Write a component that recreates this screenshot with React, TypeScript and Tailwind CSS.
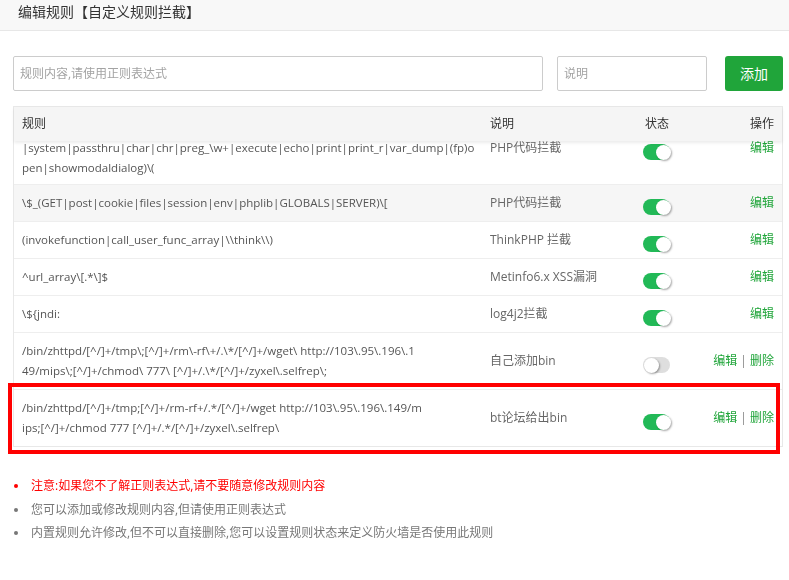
import React, { useLayoutEffect, useRef } from 'react';

type Rule = {
    lines: string[];
    desc: string;
    on: boolean;
    canDelete: boolean;
};

const rules: Rule[] = [
    {
        lines: [
            "(\\<\\?php|eval|assert|include|require|fopen|file_get_contents|file_put_contents|exec",
            "|system|passthru|char|chr|preg_\\w+|execute|echo|print|print_r|var_dump|(fp)o",
            "pen|showmodaldialog)\\(",
        ],
        desc: 'PHP代码拦截',
        on: true,
        canDelete: false,
    },
    {
        lines: ["\\$_(GET|post|cookie|files|session|env|phplib|GLOBALS|SERVER)\\["],
        desc: 'PHP代码拦截',
        on: true,
        canDelete: false,
    },
    {
        lines: ["(invokefunction|call_user_func_array|\\\\think\\\\)"],
        desc: 'ThinkPHP 拦截',
        on: true,
        canDelete: false,
    },
    {
        lines: ["^url_array\\[.*\\]$"],
        desc: 'Metinfo6.x XSS漏洞',
        on: true,
        canDelete: false,
    },
    {
        lines: ["\\${jndi:"],
        desc: 'log4j2拦截',
        on: true,
        canDelete: false,
    },
    {
        lines: [
            "/bin/zhttpd/[^/]+/tmp\\;[^/]+/rm\\-rf\\+/.\\*/[^/]+/wget\\ http://103\\.95\\.196\\.1",
            "49/mips\\;[^/]+/chmod\\ 777\\ [^/]+/.\\*/[^/]+/zyxel\\.selfrep\\;",
        ],
        desc: '自己添加bin',
        on: false,
        canDelete: true,
    },
    {
        lines: [
            "/bin/zhttpd/[^/]+/tmp;[^/]+/rm-rf+/.*/[^/]+/wget http://103\\.95\\.196\\.149/m",
            "ips;[^/]+/chmod 777 [^/]+/.*/[^/]+/zyxel\\.selfrep\\",
        ],
        desc: 'bt论坛给出bin',
        on: true,
        canDelete: true,
    },
];

const notes = [
    { text: '注意:如果您不了解正则表达式,请不要随意修改规则内容', warn: true },
    { text: '您可以添加或修改规则内容,但请使用正则表达式', warn: false },
    { text: '内置规则允许修改,但不可以直接删除,您可以设置规则状态来定义防火墙是否使用此规则', warn: false },
];

const Toggle = ({ on }: { on: boolean }) => (
    <span
        className={`relative top-[4px] inline-block h-[16px] w-[27px] rounded-full ${on ? 'bg-[#22b957]' : 'bg-[#dedede]'}`}
    >
        <span
            className={`absolute top-[1px] h-[15px] w-[15px] rounded-full bg-white shadow-[1px_1px_2px_rgba(0,0,0,0.35)] ${on ? 'right-[-1px]' : 'left-[1px]'}`}
        />
    </span>
);

export default function App() {
    const bodyRef = useRef<HTMLDivElement>(null);

    // body of the table is scrolled a little, first row sits under the header
    useLayoutEffect(() => {
        if (bodyRef.current) bodyRef.current.scrollTop = 36;
    }, []);

    return (
        <div className="relative h-[580px] w-[789px] overflow-hidden bg-white font-['Open_Sans','Noto_Sans_CJK_SC',sans-serif] text-[12px] text-[#555]">
            {/* Title bar */}
            <div className="h-[31px] border-b border-[#e7e7e7] bg-[#f8f8f8] pl-[18px] pt-[2px] text-[14px] leading-[20px] text-[#333]">
                编辑规则【自定义规则拦截】
            </div>

            <div className="pl-[13px] pr-[6px]">
                {/* Add form */}
                <div className="mt-[25px] flex items-center">
                    <input
                        className="h-[35px] w-[530px] rounded-[2px] border border-[#cccccc] px-[6px] text-[12px] outline-none placeholder:text-[#a3a3a3]"
                        placeholder="规则内容,请使用正则表达式"
                    />
                    <input
                        className="ml-[14px] h-[35px] w-[150px] rounded-[2px] border border-[#cccccc] px-[6px] text-[12px] outline-none placeholder:text-[#a3a3a3]"
                        placeholder="说明"
                    />
                    <button className="ml-[18px] h-[35px] w-[58px] rounded-[3px] bg-[#20a53a] text-[14px] text-white">
                        添加
                    </button>
                </div>

                {/* Rule table */}
                <div className="mt-[15px] w-[770px] border border-[#e8e8e8]">
                    <div className="relative z-10 grid h-[34px] grid-cols-[468px_153px_65px_1fr] items-center bg-[#f5f5f5] text-[#333] shadow-[0_2px_3px_rgba(0,0,0,0.08)]">
                        <div className="pl-[8px]">规则</div>
                        <div className="pl-[8px]">说明</div>
                        <div className="pl-[10px]">状态</div>
                        <div className="pr-[8px] text-right">操作</div>
                    </div>
                    <div ref={bodyRef} className="h-[305px] overflow-y-auto [scrollbar-width:none]">
                        {rules.map((r, i) => (
                            <div
                                key={i}
                                className={`grid grid-cols-[468px_153px_65px_1fr] items-center border-b border-[#eeeeee] leading-[20px] ${i === 0 ? 'pb-[6px] pt-[10px]' : 'py-[8px]'} ${i === 1 ? 'bg-[#f6f6f6]' : 'bg-white'} ${i === rules.length - 1 ? 'border-b-0' : ''}`}
                            >
                                <div className="whitespace-nowrap pl-[8px] text-[11.5px]">
                                    {r.lines.map((l, j) => (
                                        <div key={j}>{l}</div>
                                    ))}
                                </div>
                                <div className="pl-[8px] text-[#666]">{r.desc}</div>
                                <div className="flex h-[20px] items-center pl-[8px]">
                                    <Toggle on={r.on} />
                                </div>
                                <div className="pr-[8px] text-right text-[#20a53a]">
                                    编辑
                                    {r.canDelete && (
                                        <>
                                            <span className="text-[#888]"> | </span>删除
                                        </>
                                    )}
                                </div>
                            </div>
                        ))}
                    </div>
                </div>

                {/* Help notes */}
                <ul className="mt-[29px] space-y-[3.5px]">
                    {notes.map((n, i) => (
                        <li
                            key={i}
                            className={`flex items-center leading-[20px] ${n.warn ? 'text-[#ff0000]' : 'text-[#777]'}`}
                        >
                            <span className={`ml-[1px] mr-[13px] h-[4px] w-[4px] rounded-full ${n.warn ? 'bg-[#ff0000]' : 'bg-[#777]'}`} />
                            {n.text}
                        </li>
                    ))}
                </ul>
            </div>

            {/* Red highlight annotation */}
            <div className="pointer-events-none absolute left-[8px] top-[383px] h-[71px] w-[772px] border-[4px] border-[#ff0000]" />
        </div>
    );
}
